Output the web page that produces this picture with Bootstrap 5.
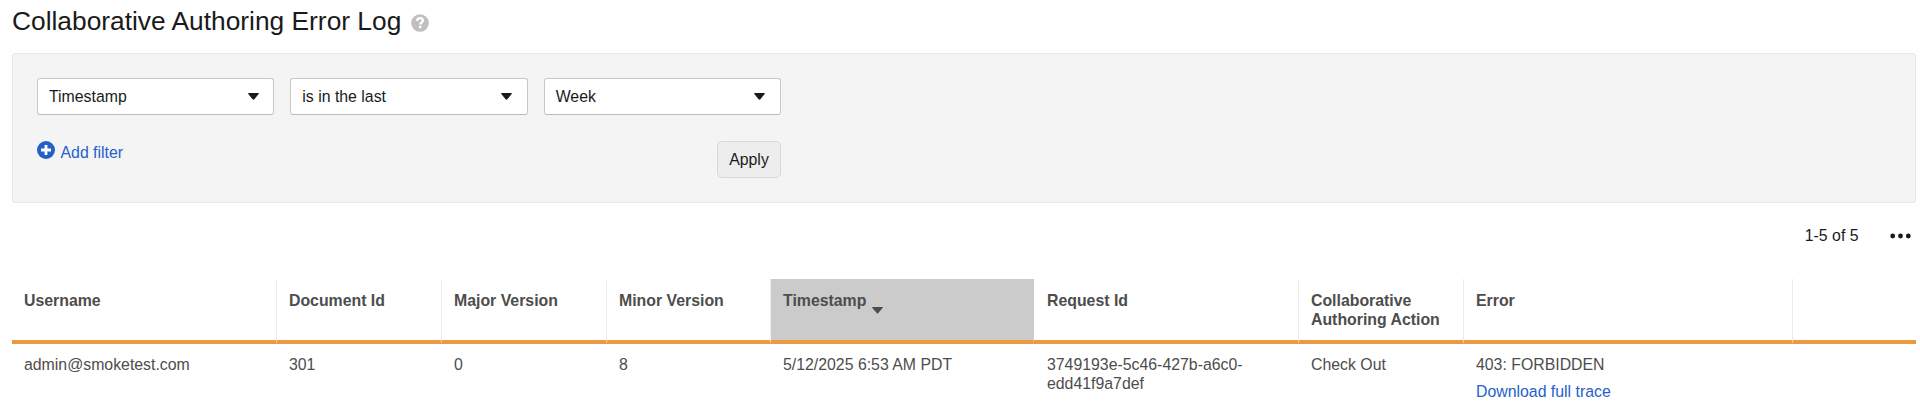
<!DOCTYPE html>
<html lang="en">
<head>
<meta charset="utf-8">
<meta name="viewport" content="width=device-width, initial-scale=1">
<title>Collaborative Authoring Error Log</title>
<link rel="stylesheet" href="https://cdn.jsdelivr.net/npm/bootstrap@5.3.0/dist/css/bootstrap.min.css">
<style>
body { font-family: "Liberation Sans", Arial, sans-serif; font-size: 15.85px; line-height: 19px; color: #1a1a1a; overflow: hidden; }
.page-wrap { padding: 0 4px 0 12px; }
.title-row { height: 53px; padding-top: 6px; gap: 10px; }
.title-row h1 { font-size: 26.33px; line-height: 30px; font-weight: 400; margin: 0; }
.title-row svg { margin-top: 8px; }
.filter-panel { height: 150px; background: #f4f4f4; border: 1px solid #e9e9e9; border-radius: 3px; padding: 24px; }
.filter-fields { width: 744px; gap: 16px; }
.filter-select { flex: 1 1 0; height: 37px; background: #fff; border: 1px solid #c8c8c8; border-bottom-color: #bcbcbc; border-radius: 3px; padding: 0 14.5px 0 11px; color: inherit; font-size: inherit; line-height: inherit; }
.filter-actions { width: 744px; margin-top: 26px; }
.link-blue { color: #2560cc; text-decoration: none; }
.add-text { margin: 2px 0 0 1.5px; }
.btn-apply { width: 64px; height: 37px; padding: 0; font-size: inherit; line-height: inherit; color: #1a1a1a; background: #ededed; border: 1px solid #d8d8d8; border-radius: 5px; }
.pager { height: 76px; padding: 23px 5px 0 0; gap: 31.5px; }
.pager svg { margin-top: 7px; }
.log-table { table-layout: fixed; width: 1904px; margin: 0; color: #4d4d4d; border-collapse: separate; border-spacing: 0; }
.log-table th { height: 65px; padding: 12px 11px 0 12px; background: #fff; color: #4d4d4d; border: 0 solid #ececec; border-right-width: 1px; border-bottom: 4px solid #ec9a42; vertical-align: top; }
.log-table th:last-child { border-right: 0; }
.log-table th.sorted { background: #cbcbcb; border-right-color: #cbcbcb; }
.log-table td { padding: 11px 12px 0; border: 0; color: #4d4d4d; background: #fff; }
.log-table .request-col { padding-left: 13px; }
.sort-arrow { margin-left: 1px; vertical-align: -8px; }
</style>
</head>
<body>
<main class="page-wrap">
  <header class="title-row d-flex align-items-start">
    <h1>Collaborative Authoring Error Log</h1>
    <svg width="18" height="18" viewBox="0 0 18 18" role="img" aria-label="Help"><circle cx="9" cy="9" r="8.8" fill="#bfbfbf"/><path d="M6.2 6.9C6.2 5.1 7.5 4.2 9.1 4.2s2.8.9 2.8 2.4c0 1.9-2.6 1.9-2.6 3.9" fill="none" stroke="#fff" stroke-width="2.3"/><circle cx="9.2" cy="13" r="1.4" fill="#fff"/></svg>
  </header>

  <section class="filter-panel">
    <div class="filter-fields d-flex">
      <button type="button" class="filter-select d-flex align-items-center justify-content-between"><span>Timestamp</span><svg width="11" height="7" viewBox="0 0 11 7"><path d="M.6 0h9.8q.8.2.2 1L6.4 6.2q-.9.9-1.8 0L.3 1Q0 .2.6 0z" fill="#1a1a1a"/></svg></button>
      <button type="button" class="filter-select d-flex align-items-center justify-content-between"><span>is in the last</span><svg width="11" height="7" viewBox="0 0 11 7"><path d="M.6 0h9.8q.8.2.2 1L6.4 6.2q-.9.9-1.8 0L.3 1Q0 .2.6 0z" fill="#1a1a1a"/></svg></button>
      <button type="button" class="filter-select d-flex align-items-center justify-content-between"><span>Week</span><svg width="11" height="7" viewBox="0 0 11 7"><path d="M.6 0h9.8q.8.2.2 1L6.4 6.2q-.9.9-1.8 0L.3 1Q0 .2.6 0z" fill="#1a1a1a"/></svg></button>
    </div>
    <div class="filter-actions d-flex justify-content-between align-items-start">
      <a href="#" class="link-blue d-flex"><svg width="18" height="18" viewBox="0 0 18 18" class="me-1"><circle cx="9" cy="9" r="9" fill="#2560c8"/><path d="M9 4v10M4 9h10" stroke="#fff" stroke-width="2.8"/></svg><span class="add-text">Add filter</span></a>
      <button type="button" class="btn btn-apply">Apply</button>
    </div>
  </section>

  <div class="pager d-flex justify-content-end">
    <span>1-5 of 5</span>
    <svg width="21" height="6" viewBox="0 0 21 6"><g fill="#1a1a1a"><circle cx="2.7" cy="3" r="2.4"/><circle cx="10.5" cy="3" r="2.4"/><circle cx="18.3" cy="3" r="2.4"/></g></svg>
  </div>

  <table class="table log-table">
    <colgroup><col style="width:265px"><col style="width:165px"><col style="width:165px"><col style="width:164px"><col style="width:263px"><col style="width:265px"><col style="width:165px"><col style="width:329px"><col style="width:123px"></colgroup>
    <thead>
      <tr><th>Username</th><th>Document Id</th><th>Major Version</th><th>Minor Version</th><th class="sorted">Timestamp <svg class="sort-arrow" width="11" height="7" viewBox="0 0 11 7"><path d="M.6 0h9.8q.8.2.2 1L6.1 6.2q-.6.6-1.2 0L.3 1Q0 .2.6 0z" fill="#4d4d4d"/></svg></th><th class="request-col">Request Id</th><th>Collaborative Authoring Action</th><th>Error</th><th></th></tr>
    </thead>
    <tbody>
      <tr><td>admin@smoketest.com</td><td>301</td><td>0</td><td>8</td><td>5/12/2025 6:53 AM PDT</td><td class="request-col">3749193e-5c46-427b-a6c0-<br>edd41f9a7def</td><td>Check Out</td><td>403: FORBIDDEN<a href="#" class="link-blue d-block mt-2">Download full trace</a></td><td></td></tr>
    </tbody>
  </table>
</main>
<script src="https://cdn.jsdelivr.net/npm/bootstrap@5.3.0/dist/js/bootstrap.bundle.min.js"></script>
</body>
</html>
